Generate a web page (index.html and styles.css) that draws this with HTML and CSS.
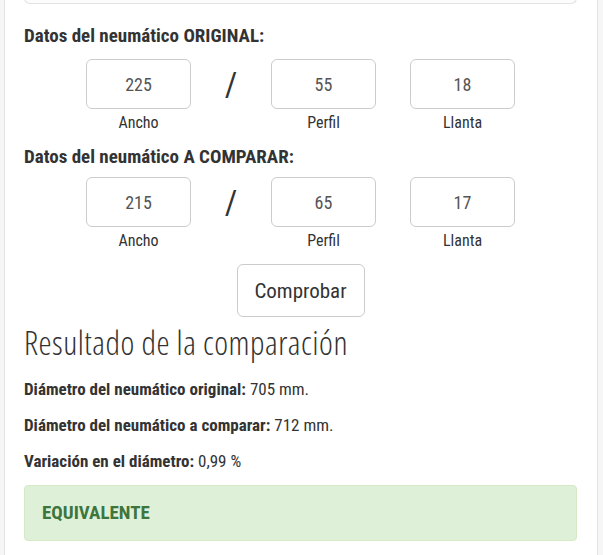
FILE: index.html
```html
<!DOCTYPE html>
<html>
<head>
    <meta charset="utf-8">
    <title>Comparador de neumáticos</title>
    <link rel="stylesheet" href="styles.css">
</head>
<body>
<div class="panel">
    <div class="top-well"></div>
    <form class="tyre-form">
        <h4 class="form-title">Datos del neumático ORIGINAL:</h4>
        <div class="tyre-row">
            <div class="tyre-field">
                <input type="text" value="225">
                <span>Ancho</span>
            </div>
            <div class="slash">/</div>
            <div class="tyre-field">
                <input type="text" value="55">
                <span>Perfil</span>
            </div>
            <div class="tyre-field">
                <input type="text" value="18">
                <span>Llanta</span>
            </div>
        </div>
        <h4 class="form-title second">Datos del neumático A COMPARAR:</h4>
        <div class="tyre-row">
            <div class="tyre-field">
                <input type="text" value="215">
                <span>Ancho</span>
            </div>
            <div class="slash">/</div>
            <div class="tyre-field">
                <input type="text" value="65">
                <span>Perfil</span>
            </div>
            <div class="tyre-field">
                <input type="text" value="17">
                <span>Llanta</span>
            </div>
        </div>
        <div class="btn-zone">
            <button type="submit">Comprobar</button>
        </div>
    </form>
    <h2 class="result-title">Resultado de la comparación</h2>
    <p class="result-line"><b>Diámetro del neumático original:</b> 705 mm.</p>
    <p class="result-line"><b>Diámetro del neumático a comparar:</b> 712 mm.</p>
    <p class="result-line"><b>Variación en el diámetro:</b> 0,99 %</p>
    <div class="alert-ok">EQUIVALENTE</div>
</div>
</body>
</html>
```

FILE: styles.css
```css
* {
    margin: 0;
    padding: 0;
    box-sizing: border-box;
}
body {
    background: #f6f6f6;
    font-family: "Roboto Condensed", "Open Sans", sans-serif;
    color: #333;
}
.panel {
    width: 594px;
    margin: -30px 0 0 4px;
    padding: 0 20px 30px 19px;
    background: #fff;
    border: 1px solid #e3e3e3;
}
.top-well {
    height: 33px;
    background: #fcfcfc;
    border: 1px solid #e3e3e3;
    border-top: 0;
    border-radius: 0 0 6px 6px;
}
.form-title {
    font-size: 19px;
    line-height: 24px;
    font-weight: bold;
    margin-top: 20px;
}
.form-title.second {
    margin-top: 12px;
}
.tyre-row {
    display: flex;
    justify-content: center;
    margin-top: 11px;
}
.second + .tyre-row {
    margin-top: 8px;
}
.tyre-field {
    width: 105px;
    text-align: center;
}
.tyre-field + .tyre-field {
    margin-left: 34px;
}
.tyre-field input {
    display: block;
    width: 105px;
    height: 50px;
    border: 1px solid #ccc;
    border-radius: 6px;
    text-align: center;
    font-family: inherit;
    font-size: 18px;
    color: #555;
    background: #fff;
}
.tyre-field span {
    display: block;
    margin-top: 4px;
    font-size: 16px;
    line-height: 20px;
    color: #333;
}
.slash {
    width: 80px;
    height: 50px;
    text-align: center;
    font-size: 34px;
    line-height: 50px;
}
.btn-zone {
    text-align: center;
    margin-top: 13px;
}
.btn-zone button {
    width: 128px;
    height: 53px;
    border: 1px solid #ccc;
    border-radius: 6px;
    background: #fff;
    font-family: inherit;
    font-size: 21px;
    color: #333;
}
.result-title {
    font-family: "Open Sans", sans-serif;
    font-stretch: condensed;
    font-weight: 300;
    font-size: 33px;
    letter-spacing: 0.5px;
    line-height: 36px;
    margin-top: 8px;
    color: #333;
}
.result-line {
    font-size: 17px;
    line-height: 20px;
    margin-top: 16px;
}
.result-line:first-of-type {
    margin-top: 18px;
}
.alert-ok {
    margin-top: 14px;
    height: 56px;
    padding: 0 17px;
    line-height: 54px;
    background: #dff0d8;
    border: 1px solid #d6e9c6;
    border-radius: 4px;
    color: #3c763d;
    font-size: 19px;
    font-weight: bold;
}
```
